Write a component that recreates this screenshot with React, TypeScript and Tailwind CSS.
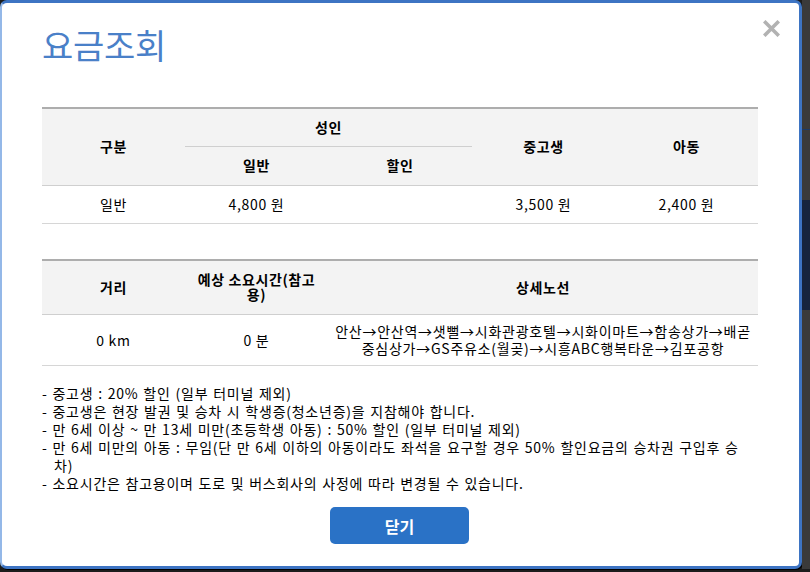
const font = { fontFamily: '"Noto Sans CJK KR", "Noto Sans", sans-serif' };

function CloseIcon() {
  return (
    <svg width="17" height="17" viewBox="0 0 17 17" className="block">
      <path d="M2.5 2.5 L14.5 14.5 M14.5 2.5 L2.5 14.5" stroke="#b2b2b2" strokeWidth="3.6" strokeLinecap="square" />
    </svg>
  );
}

export default function App() {
  const th = 'font-bold text-[14px] tracking-[0.6px] text-black text-center align-middle';
  const td = 'text-[14px] tracking-[0.7px] text-black text-center align-middle';

  return (
    <div className="w-[810px] h-[572px] bg-[#1c1c1c] flex overflow-hidden" style={font}>
      <div className="w-[802px] h-[569px] bg-white rounded-[7px] border-[3px] border-[#3d74c3] border-l-[2px] border-l-[#94b8e8] shadow-[1px_1px_0_#000] flex flex-col">
        <div className="flex justify-between items-start pl-[40px] pr-[19px] pt-[22px]">
          <h1 className="text-[34px] leading-[40px] text-[#4a80c8] font-normal tracking-[-0.3px]">요금조회</h1>
          <button className="mt-[-5px]">
            <CloseIcon />
          </button>
        </div>

        <div className="pl-[40px] mt-[42px]">
          <table className="w-[716px] table-fixed border-collapse border-t-[2px] border-t-[#adadad]">
            <colgroup>
              <col className="w-[143px]" />
              <col className="w-[143px]" />
              <col className="w-[144px]" />
              <col className="w-[143px]" />
              <col className="w-[143px]" />
            </colgroup>
            <thead className="bg-[#f3f3f3]">
              <tr className="h-[38px]">
                <th rowSpan={2} className={th}>구분</th>
                <th colSpan={2} className={`${th} border-b border-b-[#cfcfcf]`}>성인</th>
                <th rowSpan={2} className={th}>중고생</th>
                <th rowSpan={2} className={th}>아동</th>
              </tr>
              <tr className="h-[39px]">
                <th className={th}>일반</th>
                <th className={th}>할인</th>
              </tr>
            </thead>
            <tbody>
              <tr className="h-[38px] border-t border-t-[#cfcfcf] border-b border-b-[#d6d6d6]">
                <td className={td}>일반</td>
                <td className={td}>4,800 원</td>
                <td className={td}></td>
                <td className={td}>3,500 원</td>
                <td className={td}>2,400 원</td>
              </tr>
            </tbody>
          </table>

          <table className="w-[716px] table-fixed border-collapse border-t-[2px] border-t-[#adadad] mt-[35px]">
            <colgroup>
              <col className="w-[143px]" />
              <col className="w-[143px]" />
              <col className="w-[430px]" />
            </colgroup>
            <thead className="bg-[#f3f3f3]">
              <tr className="h-[55px]">
                <th className={th}>거리</th>
                <th className={`${th} leading-[15px]`}>
                  예상 소요시간(참고
                  <br />
                  용)
                </th>
                <th className={th}>상세노선</th>
              </tr>
            </thead>
            <tbody>
              <tr className="h-[51px] border-t border-t-[#cfcfcf] border-b border-b-[#d6d6d6]">
                <td className={td}>0 km</td>
                <td className={td}>0 분</td>
                <td className="text-[14px] tracking-[0.75px] text-black text-center align-middle leading-[17px] whitespace-nowrap">
                  안산→안산역→샛뻘→시화관광호텔→시화이마트→함송상가→배곧
                  <br />
                  중심상가→GS주유소(월곶)→시흥ABC행복타운→김포공항
                </td>
              </tr>
            </tbody>
          </table>

          <ul className="mt-[18px] text-[14px] leading-[18px] tracking-[0.75px] [word-spacing:1px] text-black">
            <li className="pl-[12px] -indent-[12px]">- 중고생 : 20% 할인 (일부 터미널 제외)</li>
            <li className="pl-[12px] -indent-[12px]">- 중고생은 현장 발권 및 승차 시 학생증(청소년증)을 지참해야 합니다.</li>
            <li className="pl-[12px] -indent-[12px]">- 만 6세 이상 ~ 만 13세 미만(초등학생 아동) : 50% 할인 (일부 터미널 제외)</li>
            <li className="pl-[12px] -indent-[12px] whitespace-nowrap">
              - 만 6세 미만의 아동 : 무임(단 만 6세 이하의 아동이라도 좌석을 요구할 경우 50% 할인요금의 승차권 구입후 승
              <br />
              차)
            </li>
            <li className="pl-[12px] -indent-[12px]">- 소요시간은 참고용이며 도로 및 버스회사의 사정에 따라 변경될 수 있습니다.</li>
          </ul>
        </div>

        <div className="flex justify-center mt-[15px] pr-[2px]">
          <button className="w-[139px] h-[37px] rounded-[5px] bg-[#2a72c6] text-white font-bold text-[16px]">닫기</button>
        </div>
      </div>

      <div className="flex-1 h-[569px] bg-[#3a3a3a] flex flex-col">
        <div className="h-[130px] border-b border-b-[#1d3a66]"></div>
        <div className="h-[70px] bg-[#3a3a3a]"></div>
        <div className="h-[110px] bg-[#16243d]"></div>
        <div className="flex-1 bg-[#3a3a3a]"></div>
      </div>
    </div>
  );
}
